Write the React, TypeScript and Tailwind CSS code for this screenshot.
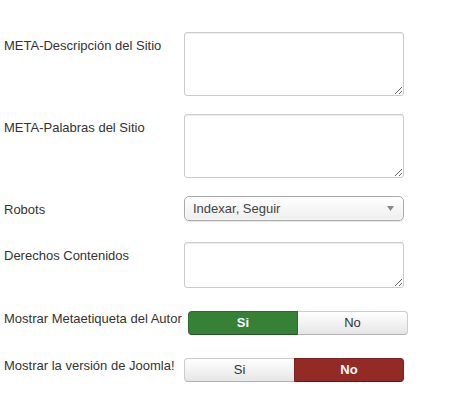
export default function App() {
  const label = "shrink-0 leading-[18px] whitespace-nowrap";
  const area =
    "block w-[220px] rounded-[3px] border border-[#ccc] bg-white shadow-[inset_0_1px_1px_rgba(0,0,0,0.075)] outline-none";

  return (
    <div className="min-h-[401px] bg-white pt-[32px] pl-[4px] font-['Liberation_Sans',Arial,sans-serif] text-[13px] text-[#333]">
      <div className="mb-[18px] flex items-start">
        <div className={`${label} w-[180px] pt-[5px]`}>META-Descripción del Sitio</div>
        <textarea className={`${area} h-[64px]`} />
      </div>

      <div className="mb-[18px] flex items-start">
        <div className={`${label} w-[180px] pt-[5px]`}>META-Palabras del Sitio</div>
        <textarea className={`${area} h-[64px]`} />
      </div>

      <div className="mb-[21px] flex items-start">
        <div className={`${label} w-[180px] pt-[5px]`}>Robots</div>
        <div className="flex h-[25px] w-[220px] items-center justify-between rounded-[5px] border border-[#aaa] bg-gradient-to-b from-white to-[#eee] pl-[8px] pr-[9px] text-[#444] shadow-[0_0_3px_rgba(255,255,255,1)_inset,0_1px_1px_rgba(0,0,0,0.1)]">
          <span>Indexar, Seguir</span>
          <svg width="7" height="5" viewBox="0 0 7 5">
            <path d="M0 0h7L3.5 5z" fill="#888" />
          </svg>
        </div>
      </div>

      <div className="mb-[23px] flex items-start">
        <div className={`${label} w-[180px] pt-[5px]`}>Derechos Contenidos</div>
        <textarea className={`${area} h-[46px]`} />
      </div>

      <div className="mb-[23px] flex items-start">
        <div className={`${label} -mt-px w-[184px]`}>Mostrar Metaetiqueta del Autor</div>
        <div className="flex h-[24px] w-[220px]">
          <div className="flex w-[110px] items-center justify-center rounded-l-[4px] border border-[#2d6a2d] border-b-[#255625] bg-[#378137] font-bold text-white">
            Si
          </div>
          <div className="flex w-[110px] items-center justify-center rounded-r-[4px] border border-l-0 border-[#ccc] border-b-[#b3b3b3] bg-gradient-to-b from-white to-[#e6e6e6] text-[#333]">
            No
          </div>
        </div>
      </div>

      <div className="flex items-start">
        <div className={`${label} -mt-px w-[180px]`}>Mostrar la versión de Joomla!</div>
        <div className="flex h-[24px] w-[220px]">
          <div className="flex w-[110px] items-center justify-center rounded-l-[4px] border border-r-0 border-[#ccc] border-b-[#b3b3b3] bg-gradient-to-b from-white to-[#e6e6e6] text-[#333]">
            Si
          </div>
          <div className="flex w-[110px] items-center justify-center rounded-r-[4px] border border-[#7a221e] border-b-[#641b18] bg-[#942a25] font-bold text-white">
            No
          </div>
        </div>
      </div>
    </div>
  );
}
